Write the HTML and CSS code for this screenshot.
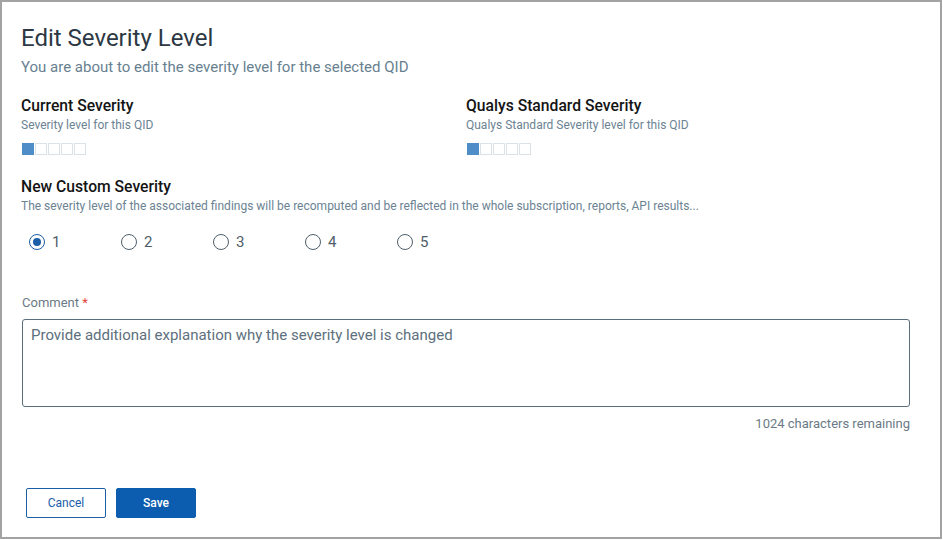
FILE: index.html
```html
<!DOCTYPE html>
<html lang="en">
<head>
  <meta charset="UTF-8">
  <title>Edit Severity Level</title>
  <link rel="stylesheet" href="styles.css">
</head>
<body>
  <div class="dialog">
    <h1 class="title">Edit Severity Level</h1>
    <p class="subtitle">You are about to edit the severity level for the selected QID</p>

    <div class="severity-row">
      <div class="severity-col">
        <div class="section-title">Current Severity</div>
        <div class="section-hint">Severity level for this QID</div>
        <div class="level-bar">
          <span class="level on"></span><span class="level"></span><span class="level"></span><span class="level"></span><span class="level"></span>
        </div>
      </div>
      <div class="severity-col">
        <div class="section-title">Qualys Standard Severity</div>
        <div class="section-hint">Qualys Standard Severity level for this QID</div>
        <div class="level-bar">
          <span class="level on"></span><span class="level"></span><span class="level"></span><span class="level"></span><span class="level"></span>
        </div>
      </div>
    </div>

    <div class="section-title custom-title">New Custom Severity</div>
    <div class="section-hint">The severity level of the associated findings will be recomputed and be reflected in the whole subscription, reports, API results...</div>

    <div class="radio-group">
      <label class="radio"><span class="radio-dot checked"></span>1</label>
      <label class="radio"><span class="radio-dot"></span>2</label>
      <label class="radio"><span class="radio-dot"></span>3</label>
      <label class="radio"><span class="radio-dot"></span>4</label>
      <label class="radio"><span class="radio-dot"></span>5</label>
    </div>

    <div class="field-label">Comment <span class="required">*</span></div>
    <div class="comment-box">Provide additional explanation why the severity level is changed</div>
    <div class="char-count">1024 characters remaining</div>

    <div class="actions">
      <button class="btn btn-cancel">Cancel</button>
      <button class="btn btn-save">Save</button>
    </div>
  </div>
</body>
</html>
```

FILE: styles.css
```css
body {
  margin: 0;
  font-family: Roboto, "Liberation Sans", sans-serif;
  background: #ffffff;
}
.dialog {
  box-sizing: border-box;
  width: 942px;
  height: 539px;
  border: 2px solid #a3a3a3;
  padding: 22px 30px 0 20px;
}
.title {
  margin: 0 0 0 -1px;
  font-size: 24px;
  font-weight: 400;
  color: #2c3843;
  line-height: 28px;
}
.subtitle {
  margin: 6px 0 0 -1px;
  font-size: 15px;
  color: #687f8f;
  line-height: 18px;
}
.severity-row {
  display: grid;
  grid-template-columns: 1fr 1fr;
  column-gap: 2px;
  margin-top: 21px;
}
.section-title {
  margin-left: -1px;
  font-size: 15.7px;
  font-weight: 500;
  color: #141414;
  line-height: 18px;
}
.section-hint {
  margin: 3px 0 0 -1px;
  font-size: 12px;
  color: #6b8393;
  line-height: 14px;
}
.level-bar {
  display: flex;
  gap: 1px;
  margin-top: 11px;
}
.level {
  box-sizing: border-box;
  width: 12px;
  height: 12px;
  border: 1px solid #dbe2e7;
}
.level.on {
  background: #4f8dc9;
  border-color: #4f8dc9;
}
.custom-title {
  margin-top: 23px;
}
.radio-group {
  display: flex;
  margin-top: 20px;
  padding-left: 7px;
}
.radio {
  display: flex;
  align-items: center;
  width: 92px;
  font-size: 15px;
  color: #4f5d68;
  line-height: 18px;
}
.radio-dot {
  box-sizing: border-box;
  width: 16px;
  height: 16px;
  border: 1px solid #4f5f6b;
  border-radius: 50%;
  margin-right: 7px;
  position: relative;
}
.radio-dot.checked {
  border-color: #1a5ea8;
}
.radio-dot.checked::after {
  content: "";
  position: absolute;
  left: 3px;
  top: 3px;
  width: 8px;
  height: 8px;
  border-radius: 50%;
  background: #1a5ea8;
}
.field-label {
  margin-top: 44px;
  font-size: 13px;
  color: #6b7a86;
  line-height: 15px;
}
.required {
  color: #e0453a;
}
.comment-box {
  box-sizing: border-box;
  height: 88px;
  margin-top: 9px;
  padding: 6px 8px;
  border: 1px solid #5a6e7b;
  border-radius: 3px;
  font-size: 15px;
  color: #5d707d;
  line-height: 18px;
}
.char-count {
  margin-top: 9px;
  text-align: right;
  font-size: 13px;
  color: #6b7a86;
  line-height: 15px;
}
.actions {
  display: flex;
  gap: 10px;
  margin-top: 57px;
  padding-left: 4px;
}
.btn {
  box-sizing: border-box;
  width: 80px;
  height: 30px;
  border-radius: 2px;
  font-family: Roboto, "Liberation Sans", sans-serif;
  font-size: 12px;
  cursor: pointer;
}
.btn-cancel {
  background: #ffffff;
  border: 1px solid #1a5ea8;
  color: #1a5ea8;
}
.btn-save {
  background: #0c5daf;
  border: 1px solid #0c5daf;
  color: #ffffff;
  font-weight: 500;
}
```
